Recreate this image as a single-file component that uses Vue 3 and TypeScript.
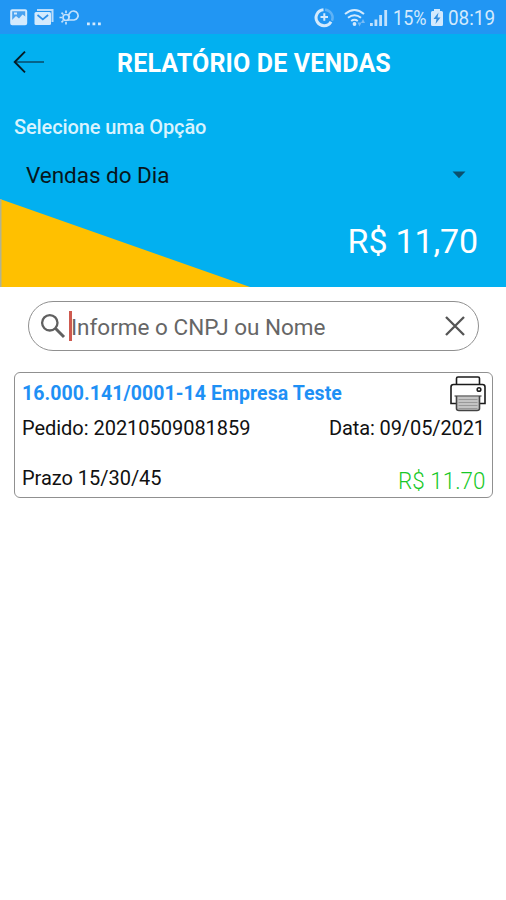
<script setup lang="ts">
import { ref } from 'vue'

interface Sale {
  customer: string
  order: string
  date: string
  terms: string
  total: string
}

const query = ref<string>('')
const period = ref<string>('Vendas do Dia')
const sales: Sale[] = [
  {
    customer: '16.000.141/0001-14 Empresa Teste',
    order: '20210509081859',
    date: '09/05/2021',
    terms: 'Prazo 15/30/45',
    total: 'R$ 11.70',
  },
]
</script>

<template>
  <main class="screen">
    <div class="status">
      <svg class="status-left" width="106" height="34" viewBox="0 0 106 34">
        <rect x="11.200" y="10.200" width="15" height="14" rx="1" fill="#48a2f0" stroke="#d3eafd" stroke-width="2" />
        <path fill="#d3eafd" d="M12 24v-4l4-4 3 2.500 3.500-4 3.500 2.500v7zM14 12.500h3v2h-3z" />
        <path fill="none" stroke="#b9dcfb" stroke-width="2" d="M37 10h15.500v12" />
        <rect x="34.500" y="12" width="16.500" height="13" rx="1.500" fill="#d3eafd" />
        <path fill="none" stroke="#2e91ea" stroke-width="1.700" d="M37.500 15l5.300 4.500 5.300-4.500" />
        <g fill="none" stroke="#c2e1fc" stroke-width="1.700">
          <circle cx="66" cy="17.500" r="3" />
          <path d="M66 10.500v2.500M66 22v2.500M59.500 17.500h2.500M61.500 12.700l1.800 1.800M61.500 22.300l1.800-1.800" />
          <path d="M68 20h6a4.500 4.500 0 1 0-4-7.200c-1.500 1.400-1.800 3.400-.2 4.700" />
        </g>
        <path fill="#d3eafd" d="M87 22.500h2.800v2.800H87zM92.500 22.500h2.800v2.800h-2.800zM98 22.500h2.800v2.800H98z" />
      </svg>
      <div class="status-right">
        <svg width="76" height="34" viewBox="0 0 76 34">
          <g fill="none" stroke="#d3eafd">
            <path stroke-width="3" d="M9.500 9.700a8 8 0 1 0 7.500 12" />
            <path stroke-width="2.400" opacity=".35" d="M11 9.700a8 8 0 0 1 7 11" />
            <path stroke-width="2" d="M6.500 17h7.500M10.300 13.300v7.500" />
            <path stroke-width="2" d="M31 14q9.500-8 19 0M34 17.700q6.500-5 13 0M37.200 21q3.300-2.500 6.600 0" />
          </g>
          <circle cx="40.500" cy="24" r="1.900" fill="#d3eafd" />
          <path fill="#78bbf5" d="M43.500 22.500h4l-2 4zM47 23l2-4 2 4z" />
          <path fill="#c2e1fc" d="M56 23h2.800v3H56zM60.500 19.500h2.800V26h-2.800zM65.200 15H68v11h-2.800zM70.300 10h2.800v16h-2.800z" />
        </svg>
        <span class="battery">15%</span>
        <svg class="battery-icon" width="14" height="34" viewBox="0 0 14 34">
          <path fill="#d3eafd" d="M4 9h6v2h1.500q1.500 0 1.500 1.500v12q0 1.500-1.500 1.500h-9Q1 26 1 24.500v-12Q1 11 2.500 11H4z" />
          <path fill="#348fdf" d="M8.500 12.500L3.500 19h3l-1 5 5-6.500h-3z" />
        </svg>
        <span class="clock">08:19</span>
      </div>
    </div>

    <header class="hero">
      <svg class="wedge" width="250" height="88" viewBox="0 0 250 88">
        <path fill="#ffc000" d="M0 0L250 88H0z" />
        <path fill="#b1b391" d="M0 0h1.500v88H0z" />
      </svg>
      <div class="title-row">
        <svg class="back" width="32" height="24" viewBox="0 0 32 24">
          <path fill="none" stroke="#075f83" stroke-width="1.900" d="M2 12h29" />
          <path fill="none" stroke="#051b25" stroke-width="1.900" d="M12 1.700L1.700 12 12 22.300" />
        </svg>
        <h1 class="title">RELATÓRIO DE VENDAS</h1>
      </div>
      <div class="label">Selecione uma Opção</div>
      <div class="select">
        <span>{{ period }}</span>
        <svg width="14" height="8" viewBox="0 0 14 8"><path fill="#0b506d" d="M.5.500h13L7 7.200z" /></svg>
      </div>
      <div class="total">R$ 11,70</div>
    </header>

    <div class="search">
      <svg class="lens" width="26" height="26" viewBox="0 0 26 26">
        <circle cx="9.800" cy="9.800" r="7.700" fill="none" stroke="#606060" stroke-width="2.300" />
        <path stroke="#606060" stroke-width="3" d="M15.300 15.300l8.700 8.700" />
      </svg>
      <i class="caret"></i>
      <span class="placeholder">{{ query || 'Informe o CNPJ ou Nome' }}</span>
      <svg class="clear" width="20" height="20" viewBox="0 0 20 20">
        <path stroke="#555" stroke-width="2.300" d="M1 1l18 18M19 1L1 19" />
      </svg>
    </div>

    <article v-for="sale in sales" :key="sale.order" class="card">
      <div class="row row-head">
        <span class="customer">{{ sale.customer }}</span>
        <svg class="printer" width="36" height="36" viewBox="0 0 36 36">
          <path fill="#c4c4c4" d="M7 20h22v14H7z" />
          <g fill="none" stroke="#1b1b1b" stroke-width="1.600">
            <path d="M6.500 8V2.500Q6.500 1 8 1h20q1.500 0 1.500 1.500V8" />
            <path d="M6 27.500H1V11q0-2.500 2.500-2.500h29Q35 8.500 35 11v16.500h-5" />
            <path d="M4.500 20h27" stroke="#777" />
            <path d="M6.500 20v12.500Q6.500 34.500 9 34.500h18q2.500 0 2.500-2V20" stroke="#444" />
            <circle cx="29" cy="13.500" r="1.800" />
          </g>
          <path stroke="#999" stroke-width="1" d="M8.500 23.500h19M8.500 26.500h19M8.500 29.500h19M8.500 32.500h19" />
        </svg>
      </div>
      <div class="row row-order">
        <span class="order">Pedido: {{ sale.order }}</span>
        <span class="date">Data: {{ sale.date }}</span>
      </div>
      <div class="row row-foot">
        <span class="terms">{{ sale.terms }}</span>
        <span class="amount">{{ sale.total }}</span>
      </div>
    </article>
  </main>
</template>

<style>
body {
  margin: 0;
  background: #fff;
}
</style>

<style scoped>
.screen {
  width: 506px;
  height: 900px;
  overflow: hidden;
  background: #fff;
  font-family: Roboto, "Liberation Sans", sans-serif;
  color: #111;
  white-space: nowrap;
}
.status {
  height: 34px;
  background: #2196f3;
  display: flex;
  justify-content: space-between;
}
.status svg {
  display: block;
  flex: none;
}
.status-right {
  display: flex;
  width: 192px;
  color: #d3eafd;
  font-size: 21px;
  line-height: 36px;
}
.battery,
.clock {
  flex: none;
  transform: scaleX(0.86);
  transform-origin: 0 50%;
}
.battery {
  margin-left: 3px;
  width: 37px;
}
.clock {
  margin-left: 4px;
  transform: scaleX(0.9);
}
.hero {
  position: relative;
  height: 253px;
  background: #02b0f0;
  display: flex;
  flex-direction: column;
}
.wedge {
  position: absolute;
  left: 0;
  bottom: 0;
}
.title-row {
  height: 56px;
  display: flex;
  align-items: center;
  padding-left: 13px;
}
.title {
  margin: 3px 0 0 72px;
  font-size: 25px;
  line-height: 30px;
  font-weight: 700;
  letter-spacing: 0.15px;
  color: #fff;
}
.label {
  height: 32px;
  margin-top: 21px;
  padding-left: 14px;
  line-height: 32px;
  font-size: 20px;
  font-weight: 500;
  letter-spacing: -0.1px;
  color: #d9f3fe;
}
.select {
  height: 40px;
  margin-top: 12px;
  padding: 0 40px 0 26px;
  display: flex;
  align-items: center;
  justify-content: space-between;
  font-size: 22.5px;
  letter-spacing: -0.03px;
  color: #07161c;
}
.total {
  position: relative;
  margin-top: 23px;
  padding-right: 28px;
  text-align: right;
  line-height: 46px;
  font-size: 34px;
  letter-spacing: -0.15px;
  color: #fff;
}
.search {
  box-sizing: border-box;
  width: 451px;
  height: 50px;
  margin: 14px 0 0 28px;
  border: 1.5px solid #909090;
  border-radius: 25px;
  display: flex;
  align-items: center;
  padding: 0 13px 0 11px;
}
.caret {
  width: 3px;
  height: 30px;
  margin-left: 3px;
  margin-right: -1px;
  background: #ce5a50;
}
.placeholder {
  font-size: 22.5px;
  line-height: 28px;
  padding-top: 1px;
  letter-spacing: 0;
  color: #666;
}
.clear {
  margin-left: auto;
}
.card {
  box-sizing: border-box;
  width: 479px;
  height: 126px;
  margin: 21px 0 0 14px;
  border: 1.5px solid #909090;
  border-radius: 6px;
  padding: 3px 7px 0;
}
.row {
  display: flex;
  justify-content: space-between;
  font-size: 20px;
  letter-spacing: -0.03px;
}
.row-head {
  height: 36px;
}
.printer {
  margin-right: -1px;
}
.customer {
  line-height: 36px;
  font-size: 19.5px;
  font-weight: 700;
  letter-spacing: 0.07px;
  color: #1e90f5;
}
.row-order {
  line-height: 33px;
}
.date {
  letter-spacing: -0.1px;
}
.row-foot {
  margin-top: 17px;
  line-height: 33px;
}
.amount {
  font-size: 24px;
  font-weight: 300;
  line-height: 39px;
  letter-spacing: 0;
  transform: scaleX(0.935);
  transform-origin: 100% 50%;
  color: #18c828;
}
</style>
